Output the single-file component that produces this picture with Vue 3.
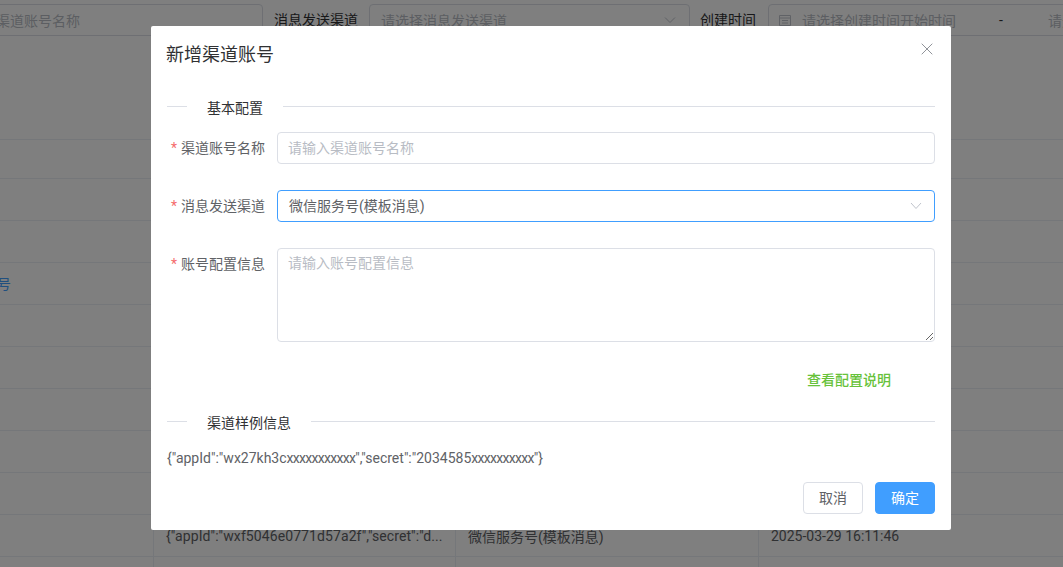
<script setup>
const rows = [39, 42, 42, 42, 42, 42, 42, 42, 42, 42, 42]
</script>

<template>
  <div class="page">
    <div class="filters">
      <div class="field name-field"><span class="ph">渠道账号名称</span></div>
      <label class="flabel first-label">消息发送渠道</label>
      <div class="field chan-field">
        <span class="ph">请选择消息发送渠道</span>
        <svg width="14" height="14" viewBox="0 0 14 14"><path d="M2 4.500 7 9.500l5-5" fill="none" stroke="#c0c4cc" stroke-width="1"/></svg>
      </div>
      <label class="flabel second-label">创建时间</label>
      <div class="field date-field">
        <svg class="cal" width="12" height="12" viewBox="0 0 12 12"><path d="M.5 1.500h11v10H.5zM.5 4h11M3 6.500h6M3 9h6" fill="none" stroke="#c0c4cc"/></svg>
        <span class="ph">请选择创建时间开始时间</span>
        <span class="dash">-</span>
        <span class="ph">请选择创建时间结束时间</span>
      </div>
    </div>
    <div class="table">
      <div class="tfirst"></div>
      <div v-for="(h, i) in rows" :key="i" class="row" :style="{ height: h + 'px' }">
        <div class="c0"><span v-if="i === 3" class="linkish">微信服务号</span></div>
        <div class="c1"><template v-if="i === 9">{"appId":"wxf5046e0771d57a2f","secret":"d...</template></div>
        <div class="c2"><template v-if="i === 9">微信服务号(模板消息)</template></div>
        <div class="c3"><template v-if="i === 9">2025-03-29 16:11:46</template></div>
      </div>
    </div>

    <div class="mask"></div>
    <div class="wrap">
      <div class="dialog">
        <header class="dhead">
          <span class="dtitle">新增渠道账号</span>
          <svg class="close" width="12" height="12" viewBox="0 0 12 12"><path d="M.7.7l10.600 10.600M11.300.7.700 11.300" stroke="#909399" stroke-width="1" fill="none"/></svg>
        </header>
        <div class="dbody">
          <div class="divider first"><span>基本配置</span></div>
          <div class="item">
            <label class="lab"><i>*</i>渠道账号名称</label>
            <div class="ctl input"><span class="ph2">请输入渠道账号名称</span></div>
          </div>
          <div class="item">
            <label class="lab"><i>*</i>消息发送渠道</label>
            <div class="ctl input focus">
              <span>微信服务号(模板消息)</span>
              <svg width="14" height="14" viewBox="0 0 14 14"><path d="M2 4 7 9.500 12 4" fill="none" stroke="#c0c4cc" stroke-width="1"/></svg>
            </div>
          </div>
          <div class="item">
            <label class="lab"><i>*</i>账号配置信息</label>
            <textarea class="ctl area" placeholder="请输入账号配置信息"></textarea>
          </div>
          <div class="linkrow"><a class="green">查看配置说明</a></div>
          <div class="divider second"><span>渠道样例信息</span></div>
          <p class="sample">{"appId":"wx27kh3c<span class="tight">xxxxxxxxxxx</span>","secret":"2034585<span class="tight">xxxxxxxxxx</span>"}</p>
        </div>
        <footer class="dfoot">
          <button class="btn">取消</button>
          <button class="btn primary">确定</button>
        </footer>
      </div>
    </div>
  </div>
</template>

<style scoped>
.page {
  position: relative;
  width: 1063px;
  height: 567px;
  overflow: hidden;
  background: #fff;
  font-family: Roboto, "Noto Sans CJK SC", sans-serif;
  font-size: 14px;
  color: #606266;
}
.filters {
  display: flex;
  height: 36px;
  padding-top: 4px;
  box-sizing: border-box;
  margin-left: -16px;
  width: 1300px;
}
.field {
  display: flex;
  align-items: center;
  box-sizing: border-box;
  height: 32px;
  border: 1px solid #dcdfe6;
  border-radius: 4px;
  flex: none;
  background: #fff;
  font-size: 14px;
}
.name-field { width: 279px; padding-left: 11px; }
.chan-field { width: 321px; justify-content: space-between; padding: 0 12px 0 11px; }
.date-field { width: 500px; padding-left: 10px; }
.flabel {
  flex: none;
  line-height: 32px;
  font-size: 14px;
  color: #303133;
}
.first-label { margin: 0 11px; }
.second-label { margin: 0 12px 0 10px; }
.ph { color: #b8bcc4; white-space: nowrap; }
.cal { margin-right: 11px; flex: none; }
.dash { margin: 0 45px 0 43px; color: #303133; width: 4px; }
.tfirst { height: 104px; border-bottom: 1px solid #ebeef5; box-sizing: border-box; }
.row {
  display: grid;
  grid-template-columns: 153px 302px 303px 1fr;
  box-sizing: border-box;
  border-bottom: 1px solid #ebeef5;
}
.row > div {
  display: flex;
  align-items: center;
  padding-left: 12px;
  white-space: nowrap;
  color: #606266;
  font-size: 14px;
}
.row .c1 { border-left: 1px solid #ebeef5; letter-spacing: .09px; }
.row .c2, .row .c3 { border-left: 1px solid #ebeef5; }
.row .c0 { padding: 0 0 2px; }
.linkish { color: #409eff; margin-left: -59px; }
.mask {
  position: absolute;
  inset: 0;
  background: rgba(0, 0, 0, .5);
}
.wrap {
  position: absolute;
  inset: 0;
  padding: 26px 0 0 151px;
  box-sizing: border-box;
}
.dialog {
  width: 800px;
  height: 504px;
  background: #fff;
  border-radius: 2px;
  display: flex;
  flex-direction: column;
  box-sizing: border-box;
}
.dhead {
  position: relative;
  padding: 17px 16px 0 15px;
  height: 58px;
  box-sizing: border-box;
}
.dtitle { font-size: 18px; line-height: 24px; color: #303133; }
.close { position: absolute; top: 17px; right: 18px; }
.dbody { padding: 0 16px; flex: 1; }
.divider {
  position: relative;
  height: 1px;
  background: #dcdfe6;
}
.divider span {
  position: absolute;
  left: 20px;
  top: -9px;
  padding: 0 20px;
  background: #fff;
  font-size: 14px;
  line-height: 22px;
  color: #303133;
}
.divider.first { margin-top: 22px; margin-bottom: 25px; }
.divider.second { margin-top: 30px; }
.item { display: flex; margin-bottom: 26px; }
.lab {
  width: 98px;
  margin-right: 12px;
  flex: none;
  text-align: right;
  font-size: 14px;
  line-height: 32px;
  color: #606266;
  white-space: nowrap;
}
.lab i { color: #f56c6c; font-style: normal; margin-right: 4px; }
.ctl {
  flex: 1;
  box-sizing: border-box;
  border: 1px solid #dcdfe6;
  border-radius: 4px;
  background: #fff;
  font-family: inherit;
  font-size: 14px;
  color: #606266;
  min-width: 0;
}
.input {
  height: 32px;
  display: flex;
  align-items: center;
  justify-content: space-between;
  padding: 0 11px 2px 11px;
}
.input svg { margin-top: 2px; }
.focus { border-color: #409eff; }
.ph2 { color: #b8bcc4; margin-left: -1px; }
.area {
  display: block;
  height: 94px;
  padding: 4px 10px;
  line-height: 21px;
  outline: none;
  resize: vertical;
}
.area::placeholder { color: #b8bcc4; }
.linkrow {
  display: flex;
  justify-content: flex-end;
  padding-right: 44px;
  margin-top: 27px;
  height: 22px;
  line-height: 22px;
}
.green { color: #67c23a; font-size: 14px; font-weight: 500; }
.sample {
  margin: 26px 0 0;
  font-size: 14px;
  line-height: 20px;
  color: #606266;
  white-space: nowrap;
}
.tight { letter-spacing: -.7px; }
.dfoot {
  display: flex;
  justify-content: flex-end;
  gap: 12px;
  padding: 0 16px 16px;
}
.btn {
  width: 60px;
  height: 32px;
  box-sizing: border-box;
  border: 1px solid #dcdfe6;
  border-radius: 4px;
  background: #fff;
  color: #606266;
  font-family: inherit;
  font-size: 14px;
  padding: 0 0 2px;
}
.primary { background: #409eff; border-color: #409eff; color: #fff; }
</style>
